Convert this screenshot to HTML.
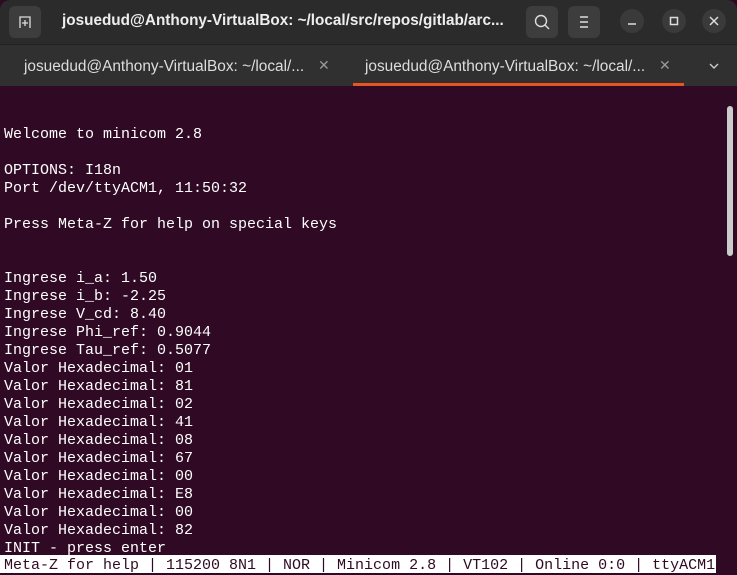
<!DOCTYPE html><html><head><style>
*{margin:0;padding:0;box-sizing:border-box}
body{width:737px;height:573px;overflow:hidden;background:#300a24;font-family:"Liberation Sans",sans-serif;position:relative}
.hb{position:absolute;left:0;top:0;width:737px;height:44px;background:#2b2b2b;border-radius:10px 10px 0 0}
.tb{position:absolute;left:0;top:44px;width:737px;height:42px;background:#303030;border-top:1px solid #222}
.btn{position:absolute;top:6px;width:32px;height:32px;background:#3d3d3d;border-radius:6px}
.circ{position:absolute;top:9px;width:24px;height:24px;border-radius:12px;background:#3a3a3a}
.btn svg,.circ svg{position:absolute;left:0;top:0}
.title{position:absolute;left:62px;top:12px;color:#eee;font-weight:bold;font-size:15.3px}
.tab{position:absolute;top:13px;color:#ddd;font-size:15.4px}
.x{position:absolute;top:12px;color:#999;font-size:14px}
.term{position:absolute;left:4px;top:90px;font-family:"Liberation Mono",monospace;font-size:15px;line-height:18px;color:#fff;white-space:pre}
.st{position:absolute;left:0;top:555px;height:18px;width:716px;background:#fff;color:#300a24;font-family:"Liberation Mono",monospace;font-size:15px;line-height:18px;white-space:pre;padding-left:4px;padding-top:2px}
.sb{position:absolute;left:727px;top:106px;width:6px;height:150px;background:#ccc;border-radius:3px}
</style></head><body>
<div class="hb">
<div class="btn" style="left:9px"><svg width="32" height="32" fill="none" stroke="#ddd" stroke-width="1.3"><path d="M11 22V11h10v11M16 14v6M13 17h6"/></svg></div>
<div class="title">josuedud@Anthony-VirtualBox: ~/local/src/repos/gitlab/arc...</div>
<div class="btn" style="left:526px"><svg width="32" height="32" fill="none" stroke="#ddd" stroke-width="1.4"><circle cx="15" cy="15" r="5.5"/><path d="M19 19l4 4"/></svg></div>
<div class="btn" style="left:568px"><svg width="32" height="32" fill="none" stroke="#ddd" stroke-width="1.4"><path d="M12 11h8M12 16h8M12 21h8"/></svg></div>
<div class="circ" style="left:620px"><svg width="24" height="24" stroke="#ddd" stroke-width="1.5"><path d="M8 15h8"/></svg></div>
<div class="circ" style="left:662px"><svg width="24" height="24" fill="none" stroke="#ddd" stroke-width="1.5"><rect x="8.5" y="8.5" width="7" height="7"/></svg></div>
<div class="circ" style="left:702px"><svg width="24" height="24" stroke="#ddd" stroke-width="1.5"><path d="M8 8l8 8M16 8l-8 8"/></svg></div>
</div>
<div class="tb">
<div class="tab" style="left:24px">josuedud@Anthony-VirtualBox: ~/local/...</div>
<div class="x" style="left:318px">✕</div>
<div class="tab" style="left:365px">josuedud@Anthony-VirtualBox: ~/local/...</div>
<div class="x" style="left:659px">✕</div>
<svg style="position:absolute;left:708px;top:16px" width="12" height="10" fill="none" stroke="#ccc" stroke-width="1.4"><path d="M2 3l4 4 4-4"/></svg>
<div style="position:absolute;left:353px;top:38px;width:331px;height:3px;background:#e95420"></div>
</div>
<div class="sb"></div>
<div class="term">

Welcome to minicom 2.8

OPTIONS: I18n
Port /dev/ttyACM1, 11:50:32

Press Meta-Z for help on special keys


Ingrese i_a: 1.50
Ingrese i_b: -2.25
Ingrese V_cd: 8.40
Ingrese Phi_ref: 0.9044
Ingrese Tau_ref: 0.5077
Valor Hexadecimal: 01
Valor Hexadecimal: 81
Valor Hexadecimal: 02
Valor Hexadecimal: 41
Valor Hexadecimal: 08
Valor Hexadecimal: 67
Valor Hexadecimal: 00
Valor Hexadecimal: E8
Valor Hexadecimal: 00
Valor Hexadecimal: 82
INIT - press enter</div>
<div class="st">Meta-Z for help | 115200 8N1 | NOR | Minicom 2.8 | VT102 | Online 0:0 | ttyACM1</div>
</body></html>
